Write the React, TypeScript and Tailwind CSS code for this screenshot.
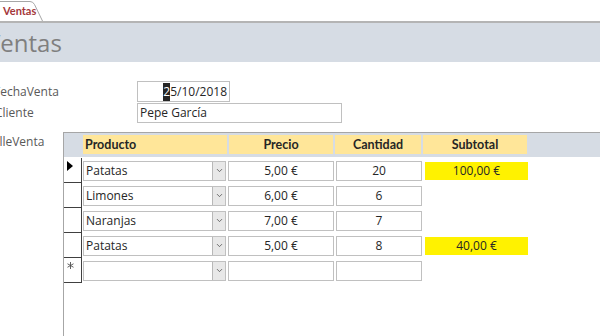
import { ChevronDown } from "lucide-react";

const rows = [
  { producto: "Patatas", precio: "5,00 €", cantidad: "20", subtotal: "100,00 €", current: true },
  { producto: "Limones", precio: "6,00 €", cantidad: "6", subtotal: "" },
  { producto: "Naranjas", precio: "7,00 €", cantidad: "7", subtotal: "" },
  { producto: "Patatas", precio: "5,00 €", cantidad: "8", subtotal: "40,00 €" },
  { producto: "", precio: "", cantidad: "", subtotal: "", isNew: true },
];

const font = { fontFamily: '"Open Sans", "Noto Sans", sans-serif' };
const boldFont = { fontFamily: 'Lato, "Open Sans", sans-serif' };

function Combo({ value }: { value: string }) {
  return (
    <div className="flex h-[20px] w-[143px] border border-[#c0c0c0] bg-white">
      <span className="flex-1 truncate pl-[2px] leading-[18px] text-[#262626]">{value}</span>
      <span className="flex w-[13px] items-center justify-center border-l border-[#b8b8b8] bg-[#e8e8e8]">
        <ChevronDown className="h-[9px] w-[9px] text-[#555555]" strokeWidth={2.2} />
      </span>
    </div>
  );
}

export default function App() {
  return (
    <div
      className="flex h-[336px] w-[600px] flex-col overflow-hidden bg-white text-[12px] text-[#262626]"
      style={font}
    >
      {/* document tab strip */}
      <div className="flex h-[23px] items-end border-b-2 border-[#b4b4b4]">
        <div className="relative flex h-[20px] w-[43px] items-center pl-[3px]">
          <svg className="absolute inset-0" width="43" height="20" viewBox="0 0 43 20">
            <path d="M0 0.5 H30 Q33 0.5 34.5 3.5 L42.5 20" fill="white" stroke="#a6a6a6" strokeWidth="1" />
          </svg>
          <span className="relative text-[11px] font-bold text-[#a4373a]" style={boldFont}>
            Ventas
          </span>
        </div>
      </div>

      {/* form header */}
      <div className="flex h-[39px] items-center bg-[#d6dce4]">
        <span className="ml-[-14px] text-[24px] leading-none text-[#7f7f7f]">Ventas</span>
      </div>

      {/* detail */}
      <div className="flex flex-1 flex-col pt-[19px]">
        <div className="flex h-[21px] items-center">
          <span className="ml-[-6px] w-[143px] text-[#595959]">FechaVenta</span>
          <div className="flex h-[21px] w-[93px] items-center justify-end border border-[#c0c0c0] pr-[2px]">
            <span className="bg-[#262626] text-white">2</span>
            <span>5/10/2018</span>
          </div>
        </div>
        <div className="mt-[1px] flex h-[20px] items-center">
          <span className="ml-[-5px] w-[142px] text-[#595959]">Cliente</span>
          <div className="flex h-[20px] w-[205px] items-center border border-[#c0c0c0] pl-[2px]">
            Pepe García
          </div>
        </div>

        <div className="mt-[9px] flex flex-1">
          <div className="w-[63px] pt-[1px]">
            <span className="ml-[-27px] text-[#595959]">DetalleVenta</span>
          </div>

          {/* subform */}
          <div className="flex flex-1 flex-col border-l border-t border-[#a6a6a6]">
            <div className="flex h-[24px] bg-[#d6dce4] pl-[19px] pt-[2px]">
              <div className="flex gap-[2px] text-[12.5px] font-bold text-[#262626]" style={boldFont}>
                <div className="h-[19px] w-[144px] bg-[#ffe699] pl-[2px] leading-[19px]">Producto</div>
                <div className="h-[19px] w-[104px] bg-[#ffe699] text-center leading-[19px]">Precio</div>
                <div className="h-[19px] w-[86px] bg-[#ffe699] text-center leading-[19px]">Cantidad</div>
                <div className="h-[19px] w-[104px] bg-[#ffe699] text-center leading-[19px]">Subtotal</div>
              </div>
            </div>

            <div className="flex flex-col pt-[1px]">
              {rows.map((r, i) => (
                <div key={i} className="flex h-[25px] items-center">
                  <div className="flex h-[25px] w-[18px] shrink-0 items-start border-b border-r border-[#404040] pl-[3px] pt-[3px]">
                    {r.current && (
                      <svg width="6" height="10" viewBox="0 0 6 10">
                        <polygon points="0,0 6,5 0,10" fill="#000" />
                      </svg>
                    )}
                    {r.isNew && (
                      <svg width="7" height="7" viewBox="0 0 7 7" className="mt-[1px]">
                        <path d="M3.5 0 V7 M0.5 1.75 L6.5 5.25 M0.5 5.25 L6.5 1.75" stroke="#505050" strokeWidth="0.9" />
                      </svg>
                    )}
                  </div>
                  <div className="ml-[1px] flex items-center gap-[2px]">
                    <Combo value={r.producto} />
                    <div className="h-[20px] w-[106px] border border-[#c0c0c0] text-center leading-[18px]">
                      {r.precio}
                    </div>
                    <div className="h-[20px] w-[86px] border border-[#c0c0c0] text-center leading-[18px]">
                      {r.cantidad}
                    </div>
                    {r.subtotal ? (
                      <div className="ml-[1px] h-[18px] w-[103px] bg-[#fff200] text-center leading-[18px]">
                        {r.subtotal}
                      </div>
                    ) : null}
                  </div>
                </div>
              ))}
            </div>
          </div>
        </div>
      </div>
    </div>
  );
}
